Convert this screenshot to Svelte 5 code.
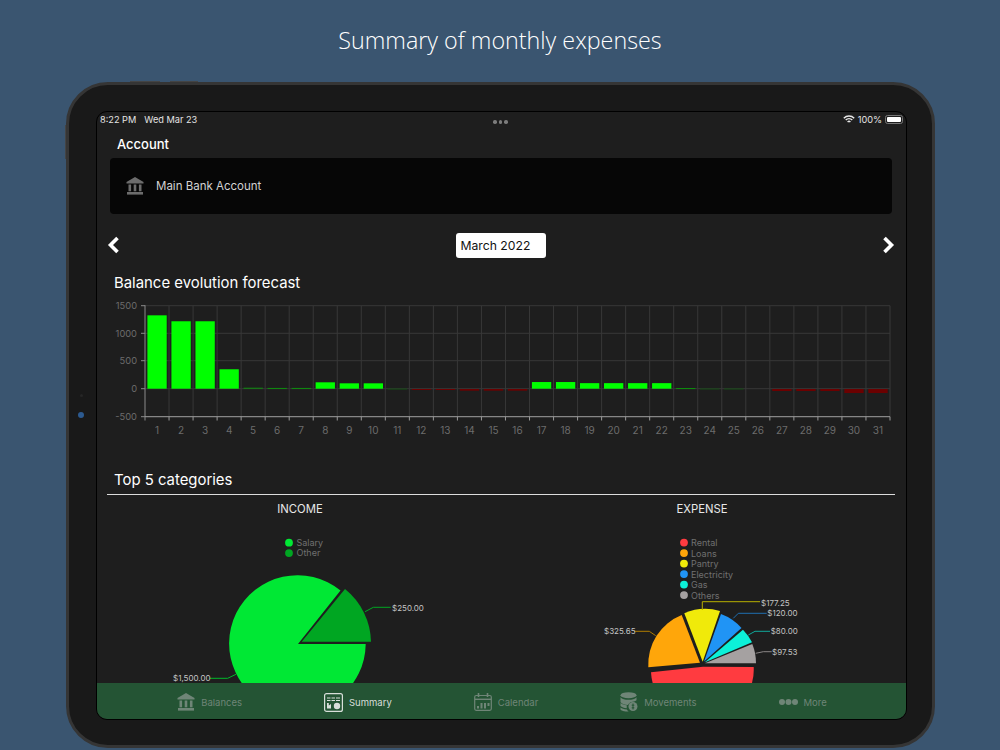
<script>
  const cell = 745 / 31;
  const zero = 388.7;
  const values = [1322,1215,1215,350,18,14,14,115,97,97,3,-18,-18,-30,-30,-30,120,120,100,100,100,100,12,4,4,0,-36,-36,-36,-72,-72];
  const scale = 27.75 / 500;
  function barFill(v) {
    if (v >= 50) return '#00ff00';
    if (v > 10) return '#0d8f0d';
    if (v > 0) return '#144d14';
    return '#6b0000';
  }
  const bars = values.map((v, i) => ({
    x: 145 + i * cell + 2.4,
    y: v >= 0 ? zero - v * scale : 389,
    h: Math.max(Math.abs(v) * scale, v === 0 ? 0 : 1),
    fill: barFill(v),
    day: i + 1
  }));
  const yTicks = [
    { label: '1500', y: 305.7 },
    { label: '1000', y: 333.3 },
    { label: '500', y: 360.7 },
    { label: '0', y: 388.7 },
    { label: '-500', y: 416.7 }
  ];
  const incomeLegend = [
    { name: 'Salary', color: '#00e834' },
    { name: 'Other', color: '#00a622' }
  ];
  const expenseLegend = [
    { name: 'Rental', color: '#ff3b40' },
    { name: 'Loans', color: '#ffa60a' },
    { name: 'Pantry', color: '#f0ea0a' },
    { name: 'Electricity', color: '#2094f5' },
    { name: 'Gas', color: '#0cf0d8' },
    { name: 'Others', color: '#a5a1a1' }
  ];
  const tabs = ['Balances', 'Summary', 'Calendar', 'Movements', 'More'];
</script>

<div class="page">
  <h1>Summary of monthly expenses</h1>
  <div class="device">
    <span class="btn top-a"></span>
    <span class="btn top-b"></span>
    <span class="btn side"></span>
    <span class="cam dim"></span>
    <span class="cam lens"></span>
    <div class="screen">
      <div class="status">
        <span class="clock">8:22 PM</span>
        <span class="date">Wed Mar 23</span>
        <span class="dots"><i></i><i></i><i></i></span>
        <span class="right">
          <svg width="12" height="9" viewBox="0 0 12 9" fill="none" stroke="#e8e8e8" stroke-width="1.4">
            <path d="M.8 3.2a7.4 7.4 0 0 1 10.4 0"/><path d="M2.7 5.1a4.7 4.7 0 0 1 6.6 0"/><path d="M4.6 7a2 2 0 0 1 2.8 0"/>
          </svg>
          <span>100%</span>
          <span class="battery"><b></b></span>
        </span>
      </div>
      <div class="main">
        <div class="label">Account</div>
        <div class="card">
          <svg width="18" height="18" viewBox="0 0 18 18" fill="#6c6c6c">
            <path d="M9 0 17.5 5v1.5H.5V5z"/>
            <rect x="2.5" y="7.5" width="2.6" height="6.8"/><rect x="7.7" y="7.5" width="2.6" height="6.8"/><rect x="12.9" y="7.5" width="2.6" height="6.8"/>
            <rect x="1" y="15" width="16" height="2.6"/>
          </svg>
          <span class="account-name">Main Bank Account</span>
        </div>
        <div class="month-row">
          <svg class="chev" width="13" height="18" viewBox="0 0 13 18" fill="none" stroke="#fff" stroke-width="3.6"><path d="M10.5 2 3.5 9l7 7"/></svg>
          <div class="month">March 2022</div>
          <svg class="chev" width="13" height="18" viewBox="0 0 13 18" fill="none" stroke="#fff" stroke-width="3.6"><path d="M2.5 2l7 7-7 7"/></svg>
        </div>
        <h2 class="forecast">Balance evolution forecast</h2>
        <svg class="chart" width="808" height="142" viewBox="97 298 808 142">
          {#each yTicks as t}
            <line x1="145" x2="890" y1={t.y} y2={t.y} stroke="#383838"/>
            <line x1="141" x2="145" y1={t.y} y2={t.y} stroke="#8a8a8a"/>
            <text class="tick ylab" x="137" y={t.y + 3.4} text-anchor="end">{t.label}</text>
          {/each}
          {#each bars as b, i}
            <line x1={145 + (i + 1) * cell} x2={145 + (i + 1) * cell} y1="305.7" y2="416.7" stroke="#383838"/>
            <line x1={145 + (i + 1) * cell} x2={145 + (i + 1) * cell} y1="416.7" y2="420.5" stroke="#9a9a9a"/>
            <rect x={b.x} y={b.y} width="19.3" height={b.h} fill={b.fill}/>
            <text class="tick" x={145 + (i + 0.5) * cell} y="434" text-anchor="middle">{b.day}</text>
          {/each}
          <line x1="145" x2="145" y1="305.2" y2="420.5" stroke="#8a8a8a"/>
          <line x1="145" x2="890" y1="416.7" y2="416.7" stroke="#9a9a9a"/>
        </svg>
        <h2 class="top5">Top 5 categories</h2>
        <div class="rule"></div>
        <div class="pies">
          <div class="pie-col">
            <h3>INCOME</h3>
            <svg width="402" height="154" viewBox="99 530 402 154">
              {#each incomeLegend as l, i}
                <circle cx="289" cy={542.7 + i * 10.4} r="3.9" fill={l.color}/>
                <text class="legend" x="296.5" y={546 + i * 10.4}>{l.name}</text>
              {/each}
              <path d="M298 644H365.700A68.300 68.300 0 1 1 340.500 590.500Z" fill="#00e834"/>
              <path d="M301.7 641.7H371A69.500 69.500 0 0 0 345 589Z" fill="#00a622"/>
              <path d="M365 611.7 373.3 607.3H390.7" class="lead" stroke="#00a622"/>
              <path d="M209.3 678.3H227.7L236 674.3" class="lead" stroke="#00b82a"/>
              <text class="value" x="392" y="610.8">$250.00</text>
              <text class="value" x="173" y="681.4">$1,500.00</text>
            </svg>
          </div>
          <div class="pie-col">
            <h3>EXPENSE</h3>
            <svg width="402" height="154" viewBox="501 530 402 154">
              {#each expenseLegend as l, i}
                <circle cx="684" cy={542.6 + i * 10.5} r="3.9" fill={l.color}/>
                <text class="legend" x="691" y={546 + i * 10.5}>{l.name}</text>
              {/each}
              <path d="M703 666.7 753.7 667A51 51 0 1 1 651 672.3Z" fill="#ff3b40"/>
              <path d="M700 662.7 681.7 615A53 53 0 0 0 648.3 667.3Z" fill="#ffa60a"/>
              <path d="M702.7 661.7 720 611A53 53 0 0 0 684.3 613.3Z" fill="#f0ea0a"/>
              <path d="M704 661.500 741.500 628A51 51 0 0 0 721 614Z" fill="#2094f5"/>
              <path d="M704.500 662.500 752 642.300A51 51 0 0 0 743 629.700Z" fill="#0cf0d8"/>
              <path d="M705 663.3H756A51 51 0 0 0 752.3 644Z" fill="#a5a1a1"/>
              <path d="M702.3 610V601.7H760" class="lead" stroke="#b8b000"/>
              <path d="M733.3 618.3 738.3 613.3H766.7" class="lead" stroke="#1f6fb0"/>
              <path d="M748.3 635 755 631.3H770" class="lead" stroke="#0fa89a"/>
              <path d="M755.7 653.3 763.3 651.7H771.7" class="lead" stroke="#8a8686"/>
              <path d="M634.3 631.3H649.3L655.7 635.7" class="lead" stroke="#b07c00"/>
              <text class="value" x="761" y="605.8">$177.25</text>
              <text class="value" x="767.3" y="616.4">$120.00</text>
              <text class="value" x="770.7" y="634.4">$80.00</text>
              <text class="value" x="772" y="654.8">$97.53</text>
              <text class="value" x="604" y="634.4">$325.65</text>
            </svg>
          </div>
        </div>
      </div>
      <nav class="tabs">
        {#each tabs as t, i}
          <div class="tab" class:active={i === 1}>
            {#if i === 0}
              <svg width="18" height="18" viewBox="0 0 18 18" fill="currentColor">
                <path d="M9 0 17.5 5v1.5H.5V5z"/>
                <rect x="2.5" y="7.5" width="2.6" height="6.8"/><rect x="7.7" y="7.5" width="2.6" height="6.8"/><rect x="12.9" y="7.5" width="2.6" height="6.8"/>
                <rect x="1" y="15" width="16" height="2.6"/>
              </svg>
            {:else if i === 1}
              <svg width="19" height="19" viewBox="0 0 19 19" fill="none">
                <rect x=".6" y=".6" width="17.8" height="17.8" rx="2" stroke="currentColor" stroke-width="1.2"/>
                <path d="M3 5h3.5M7.5 5H11M12 5h4M3 7.5h3.5M7.5 7.5H11M12 7.5h4" stroke="currentColor"/>
                <path d="M3 10h1.8v2.6L7 11v4.5H3z" fill="currentColor"/>
                <circle cx="13" cy="13" r="3.2" fill="currentColor"/>
              </svg>
            {:else if i === 2}
              <svg width="18" height="18" viewBox="0 0 18 18" fill="none" stroke="currentColor">
                <rect x=".7" y="2.5" width="16.6" height="14.8" rx="1.5" stroke-width="1.2"/>
                <path d="M.7 6.3h16.6" stroke-width="1.4"/>
                <path d="M4.5 0v4M13.5 0v4" stroke-width="1.6"/>
                <path d="M3 13h2v2.4H3zM6.5 10h2v5.4h-2zM10 10h2v5.4h-2zM13.5 10h2v3h-2z" fill="currentColor" stroke="none"/>
              </svg>
            {:else if i === 3}
              <svg width="18" height="20" viewBox="0 0 18 20" fill="currentColor">
                <ellipse cx="8.5" cy="3.2" rx="8" ry="3"/>
                <path d="M.5 5.2c1.5 2 4.5 2.6 8 2.6s6.500-.6 8-2.600v3c-1 .8-2.200 1.300-3.500 1.500-2.500.2-4 1.300-5 3.300-3.500-.2-6.200-1-7.500-2.700zM.5 11c1.300 1.300 3.500 2 6.300 2.300l-.1 3C4 16 1.700 15.200.5 14zM.5 15.600c1.300 1.100 3.300 1.700 6.400 1.900.5.900 1 1.500 1.800 2.100-4.200 0-8.200-1-8.200-2.400z"/>
                <circle cx="13" cy="14.500" r="4.500"/>
                <path d="M13 11.500v6M11.700 13.200h2.600M11.700 15.800h2.600" stroke="#245434" stroke-width="1" fill="none"/>
              </svg>
            {:else}
              <svg width="19" height="8" viewBox="0 0 19 8" fill="currentColor">
                <circle cx="3" cy="4" r="3"/><circle cx="9.500" cy="4" r="3"/><circle cx="16" cy="4" r="3"/>
              </svg>
            {/if}
            <span>{t}</span>
          </div>
        {/each}
      </nav>
    </div>
  </div>
</div>

<style>
  :global(body) {
    margin: 0;
    background: #3a5570;
  }
  .page {
    width: 1000px;
    height: 750px;
    overflow: hidden;
    font-family: Inter, "Liberation Sans", sans-serif;
  }
  h1 {
    margin: 0;
    height: 82px;
    padding-bottom: 2px;
    box-sizing: border-box;
    display: flex;
    align-items: center;
    justify-content: center;
    font-family: "Open Sans", sans-serif;
    font-weight: 300;
    font-size: 23.3px;
    color: #fff;
  }
  .device {
    position: relative;
    box-sizing: border-box;
    width: 869px;
    height: 666px;
    margin-left: 66px;
    padding: 26px 26px 25px 26px;
    border: 3px solid #353535;
    border-radius: 42px;
    background: #191919;
  }
  .btn {
    position: absolute;
    background: #444;
  }
  .top-a { top: -4px; left: 61px; width: 30px; height: 1px; }
  .top-b { top: -4px; left: 101px; width: 28px; height: 1px; }
  .side { top: 40px; left: -4px; width: 1px; height: 34px; }
  .cam {
    position: absolute;
    border-radius: 50%;
  }
  .dim { left: 11px; top: 309px; width: 3px; height: 3px; background: #262626; }
  .lens { left: 9px; top: 327px; width: 6px; height: 6px; background: #2c5a90; }
  .screen {
    box-sizing: border-box;
    width: 811px;
    height: 609px;
    margin-left: 1px;
    border: 1px solid #000;
    border-radius: 11px;
    background: #1e1e1e;
    overflow: hidden;
    display: flex;
    flex-direction: column;
  }
  .status {
    flex: none;
    height: 15px;
    padding: 0 3px 0 3px;
    display: flex;
    align-items: center;
    position: relative;
    color: #e4e4e4;
    font-size: 9.2px;
    white-space: nowrap;
  }
  .date { margin-left: 8px; }
  .dots {
    position: absolute;
    left: 396px;
    top: 8px;
    display: flex;
    gap: 2px;
  }
  .dots i {
    width: 3.500px;
    height: 3.500px;
    border-radius: 50%;
    background: #7c7c7c;
  }
  .right {
    margin-left: auto;
    display: flex;
    align-items: center;
    gap: 3px;
  }
  .battery {
    box-sizing: border-box;
    width: 18px;
    height: 9px;
    border: 1px solid #777;
    border-radius: 2.500px;
    padding: 1px;
    display: flex;
  }
  .battery b {
    flex: 1;
    background: #fff;
    border-radius: 1px;
  }
  .main {
    flex: 1;
    min-height: 0;
    overflow: hidden;
  }
  .label {
    margin: 8px 0 0 20px;
    height: 18px;
    line-height: 18px;
    font-size: 13px;
    font-weight: 500;
    color: #fff;
  }
  .card {
    box-sizing: border-box;
    margin: 5px 14px 0 13px;
    height: 56px;
    padding-left: 16px;
    display: flex;
    align-items: center;
    gap: 12px;
    background: #060606;
    border-radius: 4px;
    color: #d2d2d2;
    font-size: 11.5px;
  }
  .account-name {
    margin-top: -1px;
  }
  .month-row {
    margin: 19px 11px 0 10px;
    height: 25px;
    display: flex;
    align-items: center;
    justify-content: space-between;
  }
  .chev {
    margin-top: -2px;
  }
  .month {
    box-sizing: border-box;
    width: 90px;
    height: 25px;
    line-height: 25px;
    padding-left: 5px;
    margin-left: -1px;
    background: #fff;
    border-radius: 3px;
    color: #111;
    font-size: 12.2px;
  }
  h2 {
    margin: 0;
    height: 20px;
    line-height: 20px;
    padding-left: 17px;
    font-size: 14.9px;
    font-weight: 400;
    color: #fff;
  }
  .forecast { margin-top: 15px; }
  .chart {
    display: block;
    margin-top: 5px;
  }
  .tick {
    fill: #6c6c6c;
    font-size: 10px;
  }
  .ylab {
    font-size: 9.3px;
  }
  .top5 { margin-top: 30px; }
  .rule {
    margin: 4px 11px 0 10px;
    height: 1px;
    background: #dcdcdc;
  }
  .pies {
    display: grid;
    grid-template-columns: 402px 402px;
    padding-left: 2px;
  }
  h3 {
    margin: 7px 0 14px;
    height: 14px;
    line-height: 14px;
    text-align: center;
    font-size: 11.3px;
    font-weight: 400;
    color: #e8e8e8;
  }
  .pie-col svg {
    display: block;
  }
  .legend {
    fill: #707070;
    font-size: 9px;
  }
  .value {
    fill: #c4c4c4;
    font-size: 8px;
  }
  .lead {
    fill: none;
    stroke-width: 1;
  }
  .tabs {
    flex: none;
    box-sizing: border-box;
    height: 36px;
    padding: 3px 0 0 1px;
    background: #245434;
    display: flex;
    justify-content: center;
    align-items: center;
    gap: 82px;
  }
  .tab {
    display: flex;
    align-items: center;
    gap: 6px;
    color: #6f8577;
    font-size: 9.5px;
  }
  .tab svg {
    margin-top: -1px;
  }
  .tab.active {
    color: #d8dfda;
  }
</style>
